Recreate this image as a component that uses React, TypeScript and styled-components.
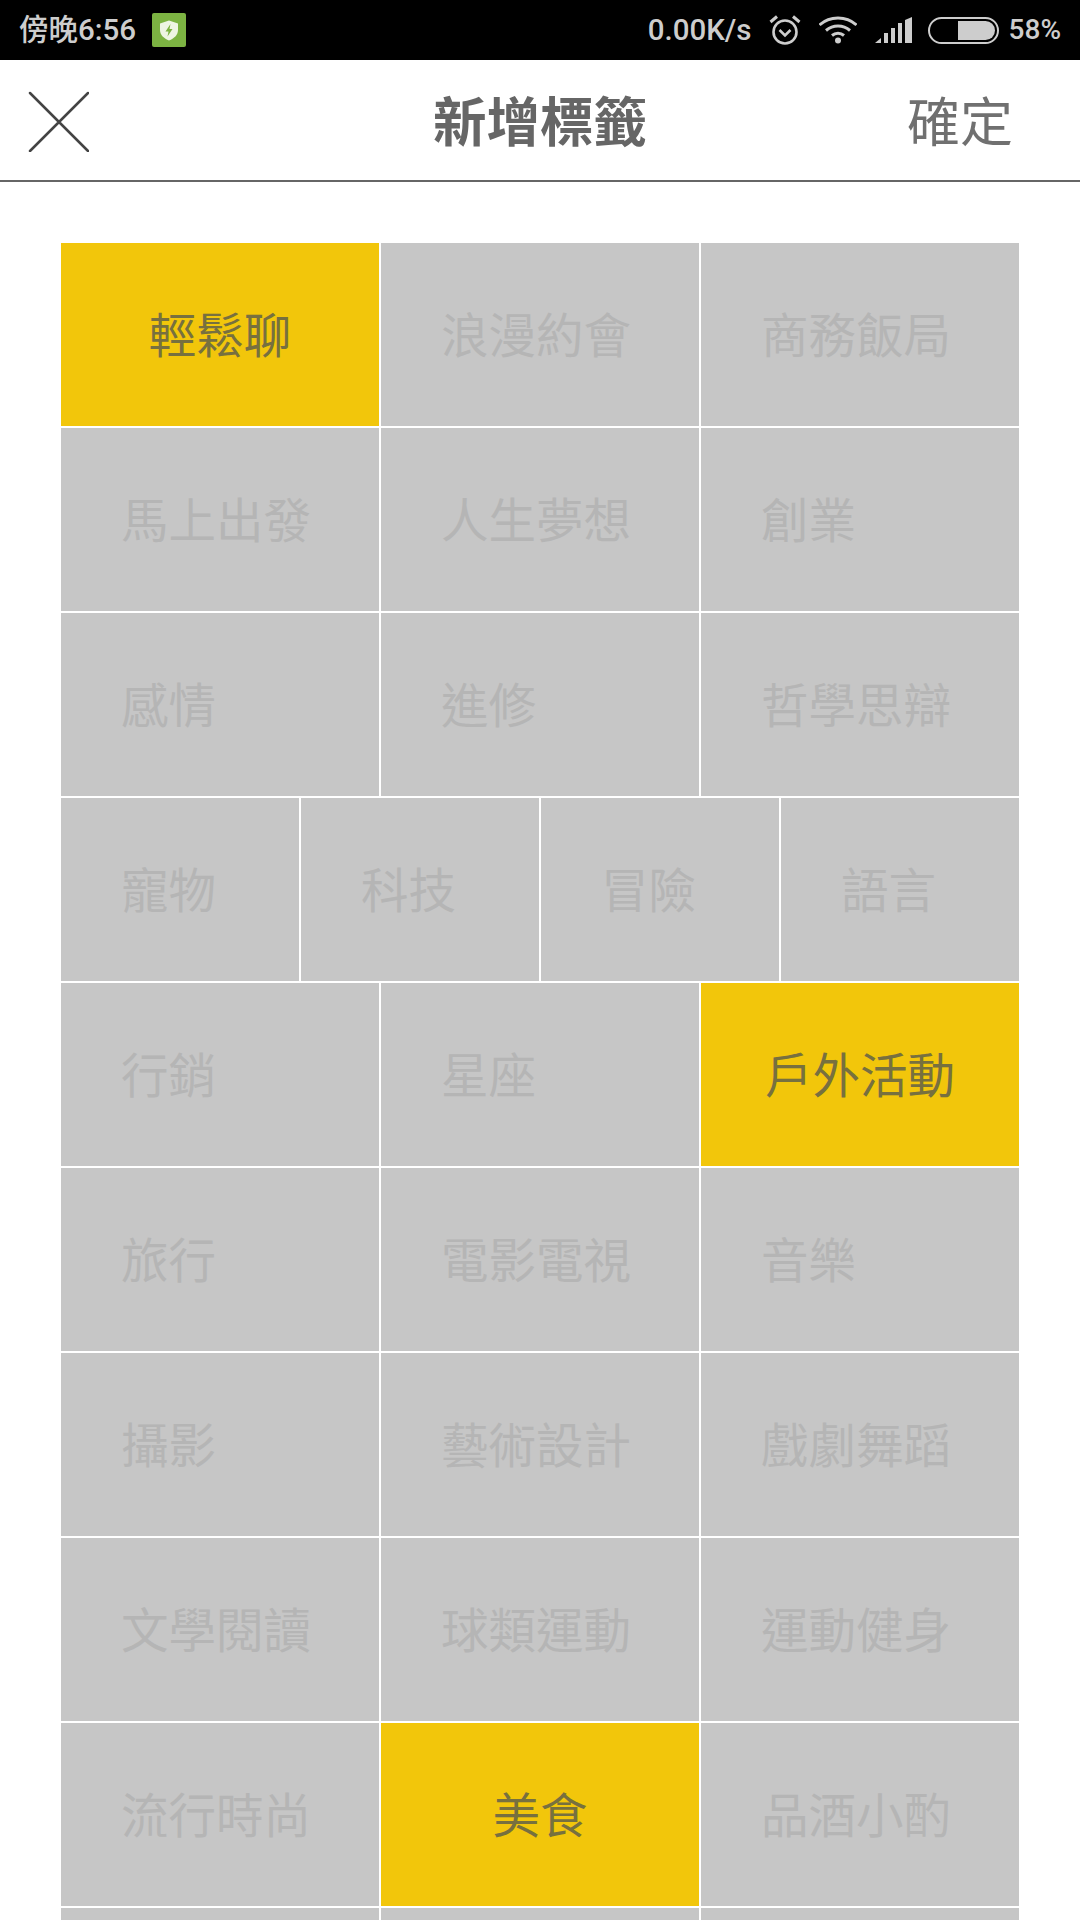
import React from "react";
import styled, { createGlobalStyle } from "styled-components";

const GlobalStyle = createGlobalStyle`
  html, body {
    margin: 0;
    padding: 0;
    background: #fff;
  }
  body {
    width: 1080px;
    height: 1920px;
    overflow: hidden;
    font-family: "Noto Sans CJK TC", "Noto Sans", sans-serif;
  }
`;

const Page = styled.div`
  width: 1080px;
  height: 1920px;
  overflow: hidden;
  background: #fff;
`;

const StatusBar = styled.div`
  height: 60px;
  background: #000;
  color: #cdcdcd;
  display: flex;
  align-items: center;
  justify-content: space-between;
  padding: 0 19px 0 19px;
  box-sizing: border-box;
`;

const StatusGroup = styled.div`
  display: flex;
  align-items: center;
`;

const StatusText = styled.span<{ $size?: number; $gap?: number }>`
  font-family: Roboto, "Noto Sans CJK TC", sans-serif;
  font-size: ${(p) => p.$size ?? 29.5}px;
  font-weight: 500;
  line-height: 60px;
  white-space: nowrap;
  margin-left: ${(p) => p.$gap ?? 0}px;
`;

const StatusIcon = styled.svg<{ $gap: number }>`
  display: block;
  flex: none;
  margin-left: ${(p) => p.$gap}px;
`;

const Header = styled.header`
  height: 122px;
  box-sizing: border-box;
  border-bottom: 2px solid #666;
  display: grid;
  grid-template-columns: 1fr auto 1fr;
  align-items: center;
`;

const CloseButton = styled.svg`
  display: block;
  margin-left: 28px;
  margin-top: 3px;
`;

const Title = styled.h1`
  margin: 0 0 2px;
  font-size: 53.5px;
  font-weight: 700;
  line-height: 1;
  color: #666;
`;

const Confirm = styled.span`
  justify-self: end;
  margin-right: 67px;
  margin-bottom: 2px;
  font-size: 53px;
  font-weight: 400;
  line-height: 1;
  color: #707070;
`;

const Tags = styled.div`
  margin-top: 61px;
  padding: 0 61px;
  display: flex;
  flex-direction: column;
  gap: 2px;
`;

const TagRow = styled.div<{ $columns: number }>`
  display: grid;
  grid-template-columns: repeat(${(p) => p.$columns}, 1fr);
  gap: 2px;
`;

const Tag = styled.div<{ $selected?: boolean }>`
  height: 183px;
  box-sizing: border-box;
  display: flex;
  align-items: center;
  justify-content: ${(p) => (p.$selected ? "center" : "flex-start")};
  padding: 0 0 4px ${(p) => (p.$selected ? 0 : 60)}px;
  font-size: 47.5px;
  line-height: 1;
  white-space: nowrap;
  background: ${(p) => (p.$selected ? "#f2c60b" : "#c6c6c6")};
  color: ${(p) => (p.$selected ? "#77703f" : "#b5b5b5")};
`;

type TagItem = { label: string; selected?: boolean };

const rows: TagItem[][] = [
  [{ label: "輕鬆聊", selected: true }, { label: "浪漫約會" }, { label: "商務飯局" }],
  [{ label: "馬上出發" }, { label: "人生夢想" }, { label: "創業" }],
  [{ label: "感情" }, { label: "進修" }, { label: "哲學思辯" }],
  [{ label: "寵物" }, { label: "科技" }, { label: "冒險" }, { label: "語言" }],
  [{ label: "行銷" }, { label: "星座" }, { label: "戶外活動", selected: true }],
  [{ label: "旅行" }, { label: "電影電視" }, { label: "音樂" }],
  [{ label: "攝影" }, { label: "藝術設計" }, { label: "戲劇舞蹈" }],
  [{ label: "文學閱讀" }, { label: "球類運動" }, { label: "運動健身" }],
  [{ label: "流行時尚" }, { label: "美食", selected: true }, { label: "品酒小酌" }],
  [{ label: "" }, { label: "" }, { label: "" }],
];

const App = () => {
  return (
    <Page>
      <GlobalStyle />
      <StatusBar>
        <StatusGroup>
          <StatusText>傍晚6:56</StatusText>
          <StatusIcon $gap={16} width="34" height="34" viewBox="0 0 34 34">
            <rect width="34" height="34" rx="2" fill="#7cb342" />
            <path d="M17 7.5 L26 10.5 V17 C26 22 22 25.5 17 27.5 C12 25.5 8 22 8 17 V10.5 Z" fill="#eef5e4" />
            <path d="M18.5 11 L13.5 18.5 H16.5 L15.5 23.5 L20.5 16 H17.5 Z" fill="#7cb342" />
          </StatusIcon>
        </StatusGroup>
        <StatusGroup>
          <StatusText>0.00K/s</StatusText>
          <StatusIcon $gap={17} width="32" height="32" viewBox="0 0 32 32" fill="none" stroke="#cdcdcd">
            <circle cx="16" cy="18" r="11.5" strokeWidth="2.6" />
            <path d="M10.5 16 L16 21.5 L21.5 16" strokeWidth="2.6" />
            <path d="M1.5 8 L8 2.5" strokeWidth="3" />
            <path d="M30.5 8 L24 2.5" strokeWidth="3" />
          </StatusIcon>
          <StatusIcon $gap={18} width="38" height="28" viewBox="0 0 38 28" fill="none" stroke="#cdcdcd" strokeWidth="3">
            <path d="M0.5 9 C10.5 -0.5 27.5 -0.5 37.5 9" />
            <path d="M7 14.5 C14 8.5 24 8.5 31 14.5" />
            <path d="M13 19.5 C16.5 16.5 21.5 16.5 25 19.5" />
            <circle cx="19" cy="24.5" r="3" fill="#cdcdcd" stroke="none" />
          </StatusIcon>
          <StatusIcon $gap={18} width="37" height="26" viewBox="0 0 37 26" fill="#cdcdcd">
            <path d="M0 26 L6 21 V26 Z" />
            <rect x="9" y="16" width="4" height="10" />
            <rect x="16" y="11" width="4" height="15" />
            <rect x="23" y="6" width="4" height="20" />
            <path d="M30 3 L37 0 V26 H30 Z" />
          </StatusIcon>
          <StatusIcon $gap={16} width="71" height="27" viewBox="0 0 71 27">
            <rect x="1" y="1" width="69" height="25" rx="12.5" fill="none" stroke="#cdcdcd" strokeWidth="2" />
            <path d="M30 4 H57.5 A9.5 9.5 0 0 1 57.5 23 H30 Z" fill="#cdcdcd" />
          </StatusIcon>
          <StatusText $size={28} $gap={10}>58%</StatusText>
        </StatusGroup>
      </StatusBar>
      <Header>
        <CloseButton width="61" height="61" viewBox="0 0 61 61" fill="none" stroke="#444" strokeWidth="2.5" strokeLinecap="round">
          <path d="M2 2 L60 60 M60 2 L2 60" />
        </CloseButton>
        <Title>新增標籤</Title>
        <Confirm>確定</Confirm>
      </Header>
      <Tags>
        {rows.map((row, i) => (
          <TagRow key={i} $columns={row.length}>
            {row.map((tag, j) => (
              <Tag key={j} $selected={tag.selected}>
                {tag.label}
              </Tag>
            ))}
          </TagRow>
        ))}
      </Tags>
    </Page>
  );
};

export default App;
